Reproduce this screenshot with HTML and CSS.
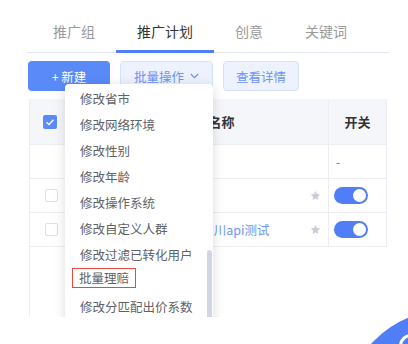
FILE: index.html
```html
<!DOCTYPE html>
<html lang="zh-CN">
<head>
    <meta charset="UTF-8">
    <title>推广计划</title>
    <link rel="stylesheet" href="styles.css">
</head>
<body>
    <div class="panel">
        <div class="tabs">
            <div class="tab">推广组</div>
            <div class="tab active">推广计划</div>
            <div class="tab">创意</div>
            <div class="tab">关键词</div>
        </div>

        <div class="toolbar">
            <button class="btn btn-primary">+ 新建</button>
            <button class="btn btn-light btn-batch">批量操作
                <svg width="9" height="6" viewBox="0 0 9 6"><path d="M0.8 1 L4.5 4.6 L8.2 1" fill="none" stroke="#6b94f5" stroke-width="1.2"/></svg>
            </button>
            <button class="btn btn-light btn-detail">查看详情</button>
        </div>

        <div class="grid">
            <div class="grid-row grid-head">
                <div class="cell cell-check"><span class="checkbox checked">
                    <svg width="14" height="14" viewBox="0 0 14 14"><path d="M3.5 7.2 L6 9.5 L10.5 4.8" fill="none" stroke="#fff" stroke-width="1.4"/></svg>
                </span></div>
                <div class="cell cell-name">推广计划ID / 推广计划名称</div>
                <div class="cell cell-switch">开关</div>
            </div>
            <div class="grid-row">
                <div class="cell cell-check"></div>
                <div class="cell cell-name"></div>
                <div class="cell cell-switch"><span class="dash">-</span></div>
            </div>
            <div class="grid-row">
                <div class="cell cell-check"><span class="checkbox"></span></div>
                <div class="cell cell-name">
                    <svg class="star" width="11" height="11" viewBox="0 0 24 24"><path d="M12 2l3 6.9 7.5.7-5.7 5 1.7 7.4L12 18.2 5.5 22l1.7-7.4-5.7-5 7.5-.7z" fill="#c9cdd6"/></svg>
                </div>
                <div class="cell cell-switch"><span class="toggle"></span></div>
            </div>
            <div class="grid-row">
                <div class="cell cell-check"><span class="checkbox"></span></div>
                <div class="cell cell-name">
                    <span class="plan-name link">信息流推广计划-成都-四川api测试</span>
                    <svg class="star" width="11" height="11" viewBox="0 0 24 24"><path d="M12 2l3 6.9 7.5.7-5.7 5 1.7 7.4L12 18.2 5.5 22l1.7-7.4-5.7-5 7.5-.7z" fill="#c9cdd6"/></svg>
                </div>
                <div class="cell cell-switch"><span class="toggle"></span></div>
            </div>
        </div>

        <!-- 批量操作下拉 -->
        <ul class="menu">
            <li>修改省市</li>
            <li>修改网络环境</li>
            <li>修改性别</li>
            <li>修改年龄</li>
            <li>修改操作系统</li>
            <li>修改自定义人群</li>
            <li>修改过滤已转化用户</li>
            <li><span class="mark">批量理赔</span></li>
            <li>修改分匹配出价系数</li>
            <span class="menu-scroll"></span>
        </ul>
    </div>

    <div class="fab"></div>
    <div class="fab-ring"></div>
</body>
</html>
```

FILE: styles.css
```css
:root {
    --blue: #4f7ef6;
    --line: #eceef4;
}

body {
    margin: 0;
    width: 408px;
    height: 344px;
    overflow: hidden;
    position: relative;
    background: #fff;
    font-family: "Noto Sans CJK SC", "Noto Sans", sans-serif;
}

.panel {
    position: relative;
    margin-left: 27px;
    width: 363px;
    height: 317px;
    overflow: hidden;
    display: flex;
    flex-direction: column;
    background: #fff;
}

/* 顶部标签 */
.tabs {
    display: flex;
    height: 53px;
    box-sizing: border-box;
    border-bottom: 1px solid #e3e8f4;
    padding-left: 5px;
}

.tab {
    position: relative;
    display: flex;
    align-items: center;
    padding: 10px 21px 0;
    font-size: 14px;
    line-height: 20px;
    color: #9a9a9a;
}

.tab.active {
    color: #333;
}

.tab.active::after {
    content: "";
    position: absolute;
    left: 0;
    right: 0;
    bottom: -1px;
    height: 3px;
    background: var(--blue);
}

/* 按钮 */
.toolbar {
    display: flex;
    gap: 10px;
    margin-top: 8px;
    padding-left: 1px;
}

.btn {
    height: 30px;
    box-sizing: border-box;
    border-radius: 4px;
    font-family: inherit;
    font-size: 12.5px;
    display: flex;
    align-items: center;
    justify-content: center;
    gap: 6px;
    padding: 0;
}

.btn-primary {
    width: 82px;
    background: #5a8af8;
    color: #fff;
    border: none;
}

.btn-light {
    background: #edf2fe;
    border: 1px solid #d6e2fd;
    color: #6b94f5;
}

.btn-batch {
    width: 93px;
}

.btn-detail {
    width: 76px;
}

/* 表格 */
.grid {
    margin: 8px 0 0 2px;
    width: 358px;
    flex: 1;
    box-sizing: border-box;
    border-left: 1px solid var(--line);
}

.grid-row {
    display: grid;
    grid-template-columns: 36px 262px 1fr;
    height: 34px;
    box-sizing: border-box;
    border-bottom: 1px solid var(--line);
    border-right: 1px solid var(--line);
}

.grid-head {
    height: 46px;
    background: #f5f6fa;
    font-size: 13px;
    font-weight: bold;
    color: #333;
}

.cell {
    display: flex;
    align-items: center;
    min-width: 0;
}

.cell-check {
    padding-left: 15px;
}

.grid-head .cell-check {
    padding-left: 13px;
}

.cell-name {
    padding: 0 7px 0 14px;
    white-space: nowrap;
    overflow: hidden;
}

.cell-switch {
    border-left: 1px solid var(--line);
    padding-left: 5px;
}

.grid-head .cell-switch {
    justify-content: center;
    padding-left: 0;
}

.checkbox {
    width: 13px;
    height: 13px;
    box-sizing: border-box;
    border: 1px solid #dcdfe6;
    border-radius: 2px;
    background: #fff;
}

.checkbox.checked {
    width: 14px;
    height: 14px;
    border: none;
    background: #5a8af8;
}

.checkbox svg {
    display: block;
}

.plan-name {
    font-size: 12.5px;
    color: #333;
}

.plan-name.link {
    color: #6d96f5;
}

.star {
    margin-left: auto;
}

.dash {
    margin-left: 2px;
    font-size: 12px;
    color: #7a6a55;
}

.toggle {
    position: relative;
    width: 34px;
    height: 17px;
    border-radius: 9px;
    background: var(--blue);
}

.toggle::after {
    content: "";
    position: absolute;
    right: 2px;
    top: 2px;
    width: 13px;
    height: 13px;
    border-radius: 50%;
    background: #fff;
}

/* 下拉菜单 */
.menu {
    position: absolute;
    left: 38px;
    top: 84px;
    width: 148px;
    height: 240px;
    margin: 0;
    padding: 1px 0 0;
    list-style: none;
    background: #fff;
    border-radius: 4px;
    box-shadow: 0 2px 12px rgba(0, 0, 0, 0.14);
}

.menu li {
    display: flex;
    align-items: center;
    height: 26px;
    padding-left: 15px;
    font-size: 12.5px;
    color: #606266;
    white-space: nowrap;
}

.mark {
    position: relative;
    top: -2px;
    margin-left: -8px;
    padding: 0 6px;
    line-height: 18px;
    border: 1.5px solid #e8473f;
}

.menu-scroll {
    position: absolute;
    right: 1px;
    top: 166px;
    width: 5px;
    height: 80px;
    border-radius: 3px;
    background: #d2d6e0;
}

/* 右下角浮动按钮 */
.fab {
    position: absolute;
    left: 345px;
    top: 310px;
    width: 204px;
    height: 204px;
    border-radius: 50%;
    background: var(--blue);
}

.fab-ring {
    position: absolute;
    left: 399px;
    top: 334px;
    width: 18px;
    height: 18px;
    border: 3px solid #fff;
    border-radius: 50%;
}
```
